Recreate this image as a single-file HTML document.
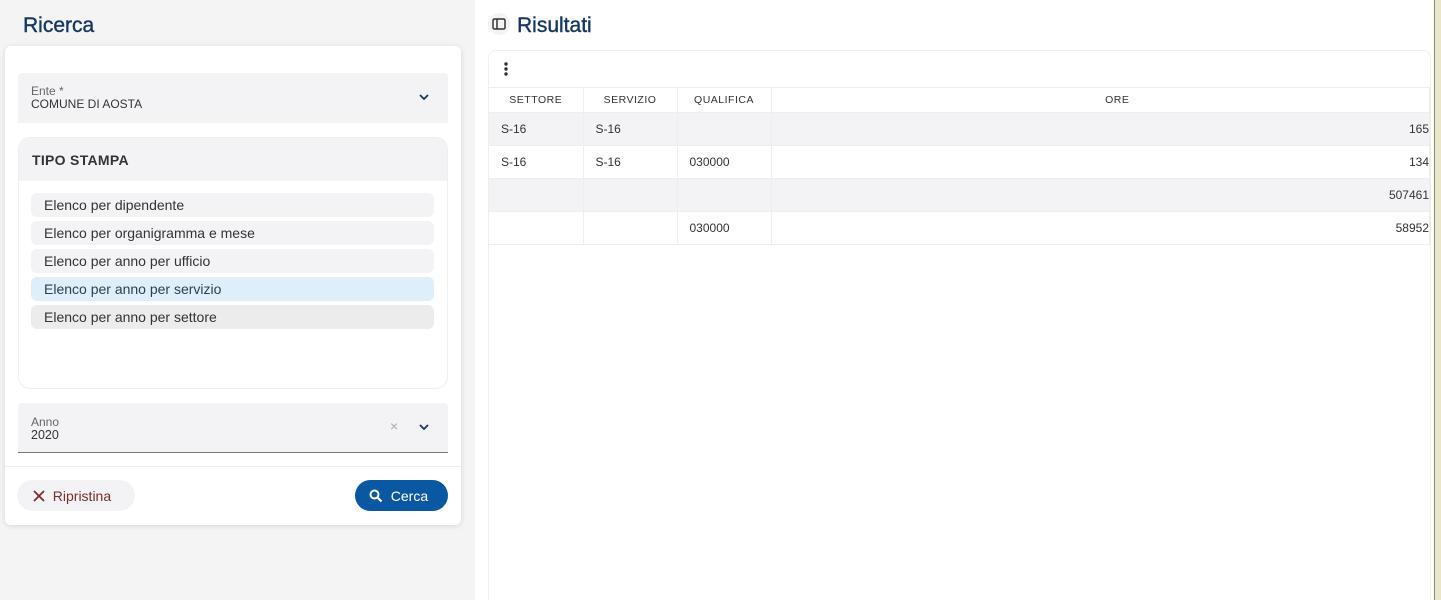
<!DOCTYPE html>
<html><head><meta charset="utf-8"><style>
*{box-sizing:border-box;margin:0;padding:0}
html,body{width:1441px;height:600px;overflow:hidden}
body{background:#fff;font-family:"Liberation Sans",sans-serif;position:relative;color:#333}
.left{position:absolute;left:0;top:0;width:475px;height:600px;background:#f4f4f5}
h1{position:absolute;font-weight:normal;font-size:21px;color:#17375e;-webkit-text-stroke:.4px #17375e}
.card{position:absolute;left:5px;top:46px;width:456px;height:479px;background:#fff;border-radius:6px;box-shadow:0 1px 6px rgba(0,0,0,.12)}
.field{position:absolute;left:13px;width:430px;background:#f3f3f5;border-radius:4px 4px 0 0}
.lbl{position:absolute;left:13px;font-size:12px;color:#666}
.val{position:absolute;left:13px;font-size:12px;color:#333}
.chev{position:absolute}
.tipo{position:absolute;left:13px;top:91px;width:430px;height:252px;border:1px solid #eee;border-radius:12px;overflow:hidden}
.tipo .hd{height:43px;background:#f3f3f5;font-size:14px;font-weight:bold;color:#333;padding:14px 13px;letter-spacing:.3px}
.item{position:absolute;left:26px;width:403px;height:24px;border-radius:6px;background:#f3f3f5;font-size:14px;color:#333;padding:4px 13px}
.btn{position:absolute;top:434px;height:31px;border-radius:16px;font-size:14px;padding:8px 0}
.res{position:absolute;left:488px;top:50px;width:943px;height:560px;border:1px solid #eee;border-radius:8px;overflow:hidden}
table{position:absolute;left:0;top:36px;border-collapse:collapse;width:941px;font-size:12px}
th{height:25px;font-weight:normal;font-size:10.5px;letter-spacing:.5px;color:#333;border:1px solid #eee;border-left:none}
td{height:33px;border-right:1px solid #eee;border-bottom:1px solid #eee;padding-left:12px;color:#333}
tr.g td{background:#f3f3f5}
td.n{text-align:right;padding-right:0}
</style></head><body>
<div class="left"></div>
<h1 style="left:23px;top:14px">Ricerca</h1>
<div class="card">
 <div class="field" style="top:27px;height:50px">
  <div class="lbl" style="top:11px">Ente *</div><div class="val" style="top:24px">COMUNE DI AOSTA</div>
  <svg class="chev" style="left:400px;top:19px" width="12" height="10" viewBox="0 0 12 10"><path d="M2 3l4 4 4-4" fill="none" stroke="#17375e" stroke-width="1.8"/></svg>
 </div>
 <div class="tipo"><div class="hd">TIPO STAMPA</div></div>
 <div class="item" style="top:147px">Elenco per dipendente</div>
 <div class="item" style="top:175px">Elenco per organigramma e mese</div>
 <div class="item" style="top:203px">Elenco per anno per ufficio</div>
 <div class="item" style="top:231px;background:#dfeefb;color:#2d3e50">Elenco per anno per servizio</div>
 <div class="item" style="top:259px;background:#ececec">Elenco per anno per settore</div>
 <div class="field" style="top:357px;height:50px;border-bottom:1px solid #777">
  <div class="lbl" style="top:12px">Anno</div><div class="val" style="top:25px;font-size:12.5px">2020</div>
  <span style="position:absolute;left:372px;top:15px;color:#aaa;font-size:14px">×</span>
  <svg class="chev" style="left:400px;top:19px" width="12" height="10" viewBox="0 0 12 10"><path d="M2 3l4 4 4-4" fill="none" stroke="#17375e" stroke-width="1.8"/></svg>
 </div>
 <div style="position:absolute;left:0;top:420px;width:456px;border-top:1px solid #eee"></div>
 <div class="btn" style="left:12px;width:118px;background:#f3f3f5;color:#7a2e2e;padding-left:16px">
  <svg width="12" height="12" viewBox="0 0 12 12" style="vertical-align:-1px"><path d="M1 1l10 10M11 1L1 11" stroke="#7a2e2e" stroke-width="1.8"/></svg>&nbsp; Ripristina</div>
 <div class="btn" style="left:350px;width:93px;background:#0a58a1;color:#fff;padding-left:14px">
  <svg width="14" height="14" viewBox="0 0 14 14" style="vertical-align:-2px"><circle cx="5.5" cy="5.5" r="4" fill="none" stroke="#fff" stroke-width="2"/><path d="M8.5 8.5l4 4" stroke="#fff" stroke-width="2.2"/></svg>&nbsp; Cerca</div>
</div>
<div style="position:absolute;left:488px;top:13px;width:22px;height:22px;border-radius:50%;background:#f3f3f5"></div>
<svg style="position:absolute;left:492px;top:18px" width="14" height="12" viewBox="0 0 14 12"><rect x="1" y="1" width="12" height="10" rx="1.5" fill="none" stroke="#333" stroke-width="1.5"/><path d="M5 1v10" stroke="#333" stroke-width="1.5"/></svg>
<h1 style="left:517px;top:14px">Risultati</h1>
<div class="res">
 <svg style="position:absolute;left:15px;top:10px" width="4" height="16"><circle cx="2" cy="3" r="1.7" fill="#333"/><circle cx="2" cy="8" r="1.7" fill="#333"/><circle cx="2" cy="13" r="1.7" fill="#333"/></svg>
 <table>
  <tr><th style="width:94px">SETTORE</th><th style="width:94px">SERVIZIO</th><th style="width:94px">QUALIFICA</th><th style="padding-left:34px">ORE</th></tr>
  <tr class="g"><td>S-16</td><td>S-16</td><td></td><td class="n">165</td></tr>
  <tr><td>S-16</td><td>S-16</td><td>030000</td><td class="n">134</td></tr>
  <tr class="g"><td></td><td></td><td></td><td class="n">507461</td></tr>
  <tr><td></td><td></td><td>030000</td><td class="n">58952</td></tr>
 </table>
</div>
<div style="position:absolute;left:1434px;top:0;width:7px;height:600px;background:#e8e5c9;border-left:1px solid #8a8a70"></div>
</body></html>
